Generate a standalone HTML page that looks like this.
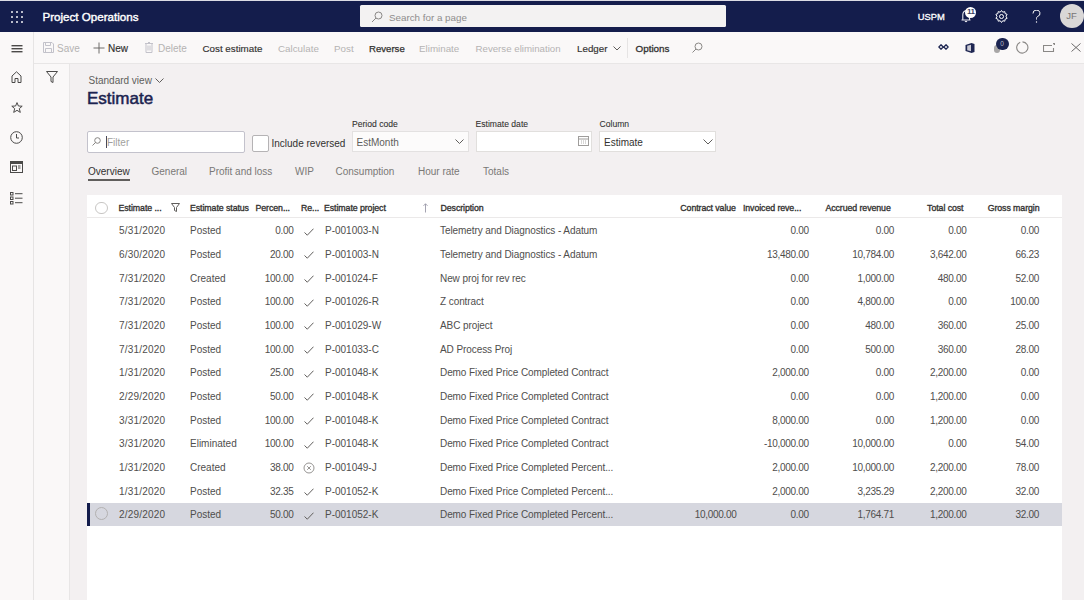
<!DOCTYPE html>
<html><head><meta charset="utf-8">
<style>
*{margin:0;padding:0;box-sizing:border-box}
html,body{width:1084px;height:600px;overflow:hidden;background:#f3f0f1;font-family:"Liberation Sans",sans-serif;color:#323130}
.a{position:absolute;white-space:nowrap}
.t{font-size:10px;line-height:12px}
#top{position:absolute;left:0;top:0;width:1084px;height:32px;background:#141d4c}
#nav{position:absolute;left:0;top:32px;width:34px;height:568px;background:#faf8f8;border-right:1px solid #e6e4e4}
#cmd{position:absolute;left:34px;top:32px;width:1050px;height:32px;background:#faf8f8;border-bottom:1px solid #e8e6e6}
#fp{position:absolute;left:34px;top:64px;width:35.5px;height:536px;background:#faf8f8;border-right:1px solid #e8e6e6}
#grid{position:absolute;left:87px;top:195px;width:974.5px;height:405px;background:#fff}
.dis{color:#b5b3b3}
.en{color:#323130}
.hd{font-size:8.8px;line-height:10px;color:#323130;-webkit-text-stroke:0.33px #323130;letter-spacing:-0.08px}
.sb{-webkit-text-stroke:0.35px currentColor}
.num{letter-spacing:-0.3px}
.cell{font-size:10px;line-height:12px;color:#4f4e4d}
.sel{position:absolute;left:87px;width:974.5px;background:#d6d7df}
</style></head><body>

<div id="top">
<div class="a" style="left:0;top:0;width:1084px;height:1px;background:#dcdce4"></div>
<svg class="a" style="left:11px;top:10.5px" width="12" height="12" viewBox="0 0 12 12" fill="#fff"><circle cx="1" cy="1" r="0.95"/><circle cx="1" cy="6" r="0.95"/><circle cx="1" cy="11" r="0.95"/><circle cx="6" cy="1" r="0.95"/><circle cx="6" cy="6" r="0.95"/><circle cx="6" cy="11" r="0.95"/><circle cx="11" cy="1" r="0.95"/><circle cx="11" cy="6" r="0.95"/><circle cx="11" cy="11" r="0.95"/></svg>
<div class="a " style="left:42.5px;top:9.5px;font-size:11.6px;color:#fff;line-height:13px;-webkit-text-stroke:0.4px #fff">Project Operations</div>
<div class="a" style="left:360px;top:5.2px;width:366px;height:21.6px;background:#f3f2f2;border-radius:1.5px"></div>
<svg class="a" style="left:371px;top:10.5px" width="12" height="12" viewBox="0 0 12 12" fill="none" stroke="#8a8886" stroke-width="1"><circle cx="7.5" cy="4.5" r="3.5"/><path d="M5 7 L1 11"/></svg>
<div class="a t" style="left:389px;top:11.8px;color:#8f8d8d;font-size:9.8px">Search for a page</div>
<div class="a " style="left:917.8px;top:11.3px;font-size:9.4px;color:#fff;line-height:12px;-webkit-text-stroke:0.3px #fff">USPM</div>
<svg class="a" style="left:960px;top:7px" width="14" height="16" viewBox="0 0 14 16" fill="none" stroke="#e8e8ee" stroke-width="1.1"><path d="M1.5 13 H10.5 M2.8 13 V8 Q2.8 4 6.5 3.5 M9.5 10 V13"/><path d="M5 14.2 Q6 15.2 7 14.2" stroke-width="1.2"/></svg>
<div class="a" style="left:965.2px;top:6.5px;width:11px;height:11px;border-radius:50%;background:#fff;color:#3a3f5f;font-size:8px;line-height:10.5px;text-align:center;font-weight:bold;letter-spacing:-0.6px">11</div>
<svg class="a" style="left:995px;top:10px" width="13" height="13" viewBox="0 0 13 13" fill="none" stroke="#fff" stroke-width="1"><circle cx="6.5" cy="6.5" r="2"/><path d="M6.5 0.5 L7.8 2.2 L9.8 1.6 L10.1 3.6 L12.1 4.3 L11 6.2 L12.1 8.4 L10.1 9.2 L9.8 11.2 L7.8 10.7 L6.5 12.5 L5.2 10.7 L3.2 11.2 L2.9 9.2 L0.9 8.4 L2 6.5 L0.9 4.3 L2.9 3.6 L3.2 1.6 L5.2 2.2 Z"/></svg>
<svg class="a" style="left:1032px;top:10px" width="9" height="14" viewBox="0 0 9 14" fill="none" stroke="#fff" stroke-width="1"><path d="M1 3.5 A3.5 3.3 0 1 1 5.5 6.5 Q4.5 7.2 4.5 8.5 V9.5"/><circle cx="4.5" cy="12" r="0.7" fill="#fff" stroke="none"/></svg>
<div class="a" style="left:1059.5px;top:4px;width:24px;height:24px;border-radius:12px;background:#d9d7d7;color:#777575;font-size:9.5px;line-height:24px;text-align:center">JF</div>
</div>
<div id="nav"></div>
<svg class="a" style="left:10.5px;top:44.6px" width="12" height="8" viewBox="0 0 12 8" fill="#4b4a49"><rect x="0.5" y="0" width="11" height="1.4"/><rect x="0.5" y="3" width="11" height="1.4"/><rect x="0.5" y="6" width="11" height="1.4"/></svg>
<svg class="a" style="left:11px;top:71px" width="11" height="12" viewBox="0 0 11 12" fill="none" stroke="#4b4a49" stroke-width="1"><path d="M1 11.5 V5 L5.5 0.8 L10 5 V11.5 H7 V7.5 H4 V11.5 Z"/></svg>
<svg class="a" style="left:10.5px;top:102px" width="12" height="11" viewBox="0 0 12 11" fill="none" stroke="#4b4a49" stroke-width="1"><path d="M6 0.6 L7.4 4 L11.2 4.2 L8.3 6.6 L9.3 10.4 L6 8.3 L2.7 10.4 L3.7 6.6 L0.8 4.2 L4.6 4 Z"/></svg>
<svg class="a" style="left:10px;top:131px" width="13" height="13" viewBox="0 0 13 13" fill="none" stroke="#4b4a49" stroke-width="1"><circle cx="6.5" cy="6.5" r="5.8"/><path d="M6.5 3 V7 H9"/></svg>
<svg class="a" style="left:10px;top:161px" width="13" height="12" viewBox="0 0 13 12"><rect x="0.5" y="0.5" width="12" height="11" fill="none" stroke="#4b4a49" stroke-width="1"/><rect x="0.5" y="0.5" width="12" height="2.5" fill="#4b4a49"/><rect x="2.5" y="5" width="4" height="4.5" fill="none" stroke="#4b4a49" stroke-width="1"/><path d="M8 5 H10.5 M8 7 H10.5" stroke="#4b4a49" stroke-width="1"/></svg>
<svg class="a" style="left:10px;top:191.5px" width="13" height="13" viewBox="0 0 13 13" fill="none" stroke="#4b4a49" stroke-width="1"><rect x="0.5" y="0.5" width="2.5" height="2.5"/><rect x="0.5" y="5" width="2.5" height="2.5"/><rect x="0.5" y="9.5" width="2.5" height="2.5"/><path d="M5 1.7 H12.5 M5 6.2 H12.5 M5 10.7 H12.5"/></svg>
<div id="cmd"></div>
<svg class="a" style="left:43px;top:42px" width="11" height="11" viewBox="0 0 11 11" fill="none" stroke="#c3c2ca" stroke-width="1"><path d="M0.5 0.5 H9 L10.5 2 V10.5 H0.5 Z M2.5 0.5 V3.5 H7.5 V0.5 M2.5 10.5 V6.5 H8.5 V10.5"/></svg>
<div class="a dis" style="left:57px;top:42.6px;font-size:10px">Save</div>
<svg class="a" style="left:93px;top:41.5px" width="12" height="12" viewBox="0 0 12 12" fill="none" stroke="#605e5c" stroke-width="0.9"><path d="M6 0.5 V11.5 M0.5 6 H11.5"/></svg>
<div class="a en" style="left:108px;top:42.6px;font-size:10px;-webkit-text-stroke:0.15px #323130">New</div>
<svg class="a" style="left:145px;top:42px" width="8" height="11" viewBox="0 0 8 11" fill="none" stroke="#c3c2ca" stroke-width="1"><path d="M0 1.5 H8 M3 0.5 H5 M1 1.5 V10.5 H7 V1.5 M3 3.5 V8.5 M5 3.5 V8.5"/></svg>
<div class="a dis" style="left:158px;top:42.6px;font-size:10px">Delete</div>
<div class="a en" style="left:202.5px;top:42.6px;font-size:9.8px;-webkit-text-stroke:0.15px #323130">Cost estimate</div>
<div class="a dis" style="left:278px;top:42.6px;font-size:9.8px">Calculate</div>
<div class="a dis" style="left:334px;top:42.6px;font-size:9.8px">Post</div>
<div class="a en" style="left:369px;top:42.6px;font-size:9.6px;-webkit-text-stroke:0.25px #323130">Reverse</div>
<div class="a dis" style="left:419px;top:42.6px;font-size:9.8px">Eliminate</div>
<div class="a dis" style="left:475.5px;top:42.6px;font-size:9.7px">Reverse elimination</div>
<div class="a en" style="left:577px;top:42.6px;font-size:9.8px;-webkit-text-stroke:0.15px #323130">Ledger</div>
<svg class="a" style="left:612.5px;top:46.3px" width="8" height="5" viewBox="0 0 8 5" fill="none" stroke="#605e5c" stroke-width="1"><path d="M0.5 0.5 L4 4 L7.5 0.5"/></svg>
<div class="a" style="left:627px;top:38px;width:1px;height:20px;background:#e6e4e4"></div>
<div class="a en" style="left:635.5px;top:42.6px;font-size:9.9px;-webkit-text-stroke:0.3px #323130">Options</div>
<svg class="a" style="left:692px;top:42px" width="11" height="11" viewBox="0 0 11 11" fill="none" stroke="#8a8886" stroke-width="1"><circle cx="6.5" cy="4.5" r="3.5"/><path d="M4 7 L0.5 10.5"/></svg>
<svg class="a" style="left:938px;top:44px" width="11" height="6" viewBox="0 0 11 6" fill="none" stroke="#1e2652" stroke-width="1.3"><path d="M3 0.8 L5.2 3 L3 5.2 L0.8 3 Z M8 0.8 L10.2 3 L8 5.2 L5.8 3 Z"/></svg>
<svg class="a" style="left:965px;top:43px" width="10" height="10" viewBox="0 0 10 10"><path d="M0.5 2 L6.5 0 L9.5 1 V9 L6.5 10 L0.5 8 Z" fill="#1e2652"/><path d="M2.2 2.8 L6 1.8 V8.2 L2.2 7.2 Z" fill="#c9c9d3"/></svg>
<div class="a" style="left:994px;top:45px;width:6px;height:8px;border-radius:3px;background:#a8a6a6"></div>
<div class="a" style="left:995.5px;top:38.3px;width:13px;height:11.5px;border-radius:6px;background:#1b2350;color:#b8b8c8;font-size:6.5px;line-height:11.5px;text-align:center">0</div>
<svg class="a" style="left:1016px;top:41px" width="13" height="13" viewBox="0 0 13 13" fill="none" stroke="#8a8886" stroke-width="1.1"><path d="M4.2 1.3 A5.6 5.6 0 1 0 6.5 0.9"/></svg>
<svg class="a" style="left:1043px;top:43px" width="12" height="9" viewBox="0 0 12 9" fill="none" stroke="#8a8886" stroke-width="1.1"><path d="M9 2.5 H0.5 V8.5 H10.5 V5"/><path d="M10 0.5 L11.5 0.5 L11.5 2" stroke-width="1.3"/></svg>
<svg class="a" style="left:1071px;top:43px" width="10" height="9" viewBox="0 0 10 9" fill="none" stroke="#6b6969" stroke-width="1"><path d="M0.5 0.5 L9.5 8.5 M9.5 0.5 L0.5 8.5"/></svg>
<div id="fp"></div>
<svg class="a" style="left:46px;top:71px" width="12" height="12" viewBox="0 0 12 12" fill="none" stroke="#4b4a49" stroke-width="1"><path d="M0.5 0.5 H11.5 L7 6 V11.5 L5 10.5 V6 Z"/></svg>
<div class="a t" style="left:88.5px;top:74.5px;font-size:10px;color:#605e5c">Standard view</div>
<svg class="a" style="left:155px;top:77.5px" width="9" height="5" viewBox="0 0 9 5" fill="none" stroke="#605e5c" stroke-width="1"><path d="M0.5 0.5 L4.5 4.5 L8.5 0.5"/></svg>
<div class="a " style="left:87px;top:89px;font-size:17px;color:#1b2350;line-height:19px;-webkit-text-stroke:0.5px #1b2350">Estimate</div>
<div class="a" style="left:87px;top:130.5px;width:158px;height:22px;background:#fff;border:1.3px solid #c3c2cc;border-radius:2px"></div>
<svg class="a" style="left:92px;top:137px" width="9" height="9" viewBox="0 0 9 9" fill="none" stroke="#7a7876" stroke-width="0.9"><circle cx="5.5" cy="3.5" r="2.8"/><path d="M3.5 5.5 L0.5 8.5"/></svg>
<div class="a" style="left:106px;top:135.5px;width:1.3px;height:12px;background:#4a4a5a"></div>
<div class="a t" style="left:107px;top:137px;color:#a19f9d">Filter</div>
<div class="a" style="left:252px;top:135px;width:17px;height:17px;background:#fff;border:1px solid #b5b3b5;border-radius:2px"></div>
<div class="a t" style="left:271.5px;top:138px;color:#323130;font-size:10px">Include reversed</div>
<div class="a " style="left:352px;top:119.3px;font-size:8.6px;line-height:10px;color:#323130;-webkit-text-stroke:0.08px #323130">Period code</div>
<div class="a" style="left:352px;top:131px;width:117px;height:21px;background:#fcfbfb;border:1px solid #e3e1e1"></div>
<div class="a t" style="left:356.5px;top:136.6px;color:#605e5c">EstMonth</div>
<svg class="a" style="left:455px;top:139px" width="9" height="5" viewBox="0 0 9 5" fill="none" stroke="#605e5c" stroke-width="1"><path d="M0.5 0.5 L4.5 4.5 L8.5 0.5"/></svg>
<div class="a " style="left:475.5px;top:119.3px;font-size:8.6px;line-height:10px;color:#323130;-webkit-text-stroke:0.08px #323130">Estimate date</div>
<div class="a" style="left:476px;top:131px;width:116px;height:21px;background:#fff;border:1px solid #e1dfdd"></div>
<svg class="a" style="left:578px;top:136px" width="11" height="10" viewBox="0 0 11 10" fill="none" stroke="#9f9d9b" stroke-width="1"><rect x="0.5" y="0.5" width="10" height="9"/><path d="M0.5 3 H10.5"/><path d="M3 5 H4 M5 5 H6 M7 5 H8 M3 7 H4 M5 7 H6 M7 7 H8" stroke-width="0.8"/></svg>
<div class="a " style="left:599.5px;top:119.3px;font-size:8.6px;line-height:10px;color:#323130;-webkit-text-stroke:0.08px #323130">Column</div>
<div class="a" style="left:599px;top:131px;width:117px;height:21px;background:#fff;border:1px solid #e1dfdd"></div>
<div class="a t" style="left:604px;top:136.5px;color:#323130">Estimate</div>
<svg class="a" style="left:703px;top:139px" width="10" height="6" viewBox="0 0 10 6" fill="none" stroke="#605e5c" stroke-width="1"><path d="M0.5 0.5 L5 5 L9.5 0.5"/></svg>
<div class="a t" style="left:88px;top:165.7px;color:#323130;font-size:10px">Overview</div>
<div class="a" style="left:88px;top:179px;width:42px;height:2px;background:#605e5c"></div>
<div class="a t" style="left:151.5px;top:165.7px;color:#7a7876;font-size:10px">General</div>
<div class="a t" style="left:209px;top:165.7px;color:#7a7876;font-size:10px">Profit and loss</div>
<div class="a t" style="left:295px;top:165.7px;color:#7a7876;font-size:10px">WIP</div>
<div class="a t" style="left:335.5px;top:165.7px;color:#7a7876;font-size:10px">Consumption</div>
<div class="a t" style="left:418px;top:165.7px;color:#7a7876;font-size:10px">Hour rate</div>
<div class="a t" style="left:483px;top:165.7px;color:#7a7876;font-size:10px">Totals</div>
<div id="grid"></div>
<div class="a" style="left:87px;top:217px;width:974.5px;height:1px;background:#ebe9e9"></div>
<div class="a" style="left:95px;top:201.5px;width:12.5px;height:12.5px;border:1px solid #c8c6c4;border-radius:50%"></div>
<div class="a hd" style="left:118.5px;top:202.5px;">Estimate ...</div>
<div class="a hd" style="left:190px;top:202.5px;">Estimate status</div>
<div class="a hd" style="left:255.5px;top:202.5px;">Percen...</div>
<div class="a hd" style="left:301px;top:202.5px;">Re...</div>
<div class="a hd" style="left:324px;top:202.5px;">Estimate project</div>
<div class="a hd" style="left:440.5px;top:202.5px;">Description</div>
<svg class="a" style="left:171px;top:203px" width="9" height="9" viewBox="0 0 9 9" fill="none" stroke="#605e5c" stroke-width="1"><path d="M0.5 0.5 H8.5 L5.5 4.5 V8.5 L3.5 7.5 V4.5 Z"/></svg>
<svg class="a" style="left:422.5px;top:202.8px" width="5" height="10" viewBox="0 0 5 10" fill="none" stroke="#9a99a8" stroke-width="0.9"><path d="M2.5 0.8 V9.5 M0.5 2.8 L2.5 0.8 L4.5 2.8"/></svg>
<div class="a hd" style="left:680.3px;top:202.5px;">Contract value</div>
<div class="a hd" style="left:742.9px;top:202.5px;">Invoiced reve...</div>
<div class="a hd" style="left:825.4px;top:202.5px;">Accrued revenue</div>
<div class="a hd" style="left:927.1px;top:202.5px;">Total cost</div>
<div class="a hd" style="left:987.7px;top:202.5px;">Gross margin</div>
<div class="a cell" style="left:119px;top:225.2px;letter-spacing:0.2px">5/31/2020</div>
<div class="a cell" style="left:190px;top:225.2px;">Posted</div>
<div class="a cell num" style="right:790.5px;top:225.2px;">0.00</div>
<svg class="a" style="left:304px;top:227.50px" width="10" height="8" viewBox="0 0 10 8" fill="none" stroke="#605e5c" stroke-width="1"><path d="M0.5 4.5 L3.3 7.2 L9.5 0.7"/></svg>
<div class="a cell" style="left:325px;top:225.2px;">P-001003-N</div>
<div class="a cell" style="left:440px;top:225.2px;letter-spacing:-0.08px">Telemetry and Diagnostics - Adatum</div>
<div class="a cell num" style="right:275.20000000000005px;top:225.2px;">0.00</div>
<div class="a cell num" style="right:190px;top:225.2px;">0.00</div>
<div class="a cell num" style="right:117.5px;top:225.2px;">0.00</div>
<div class="a cell num" style="right:45px;top:225.2px;">0.00</div>
<div class="a cell" style="left:119px;top:248.88px;letter-spacing:0.2px">6/30/2020</div>
<div class="a cell" style="left:190px;top:248.88px;">Posted</div>
<div class="a cell num" style="right:790.5px;top:248.88px;">20.00</div>
<svg class="a" style="left:304px;top:251.18px" width="10" height="8" viewBox="0 0 10 8" fill="none" stroke="#605e5c" stroke-width="1"><path d="M0.5 4.5 L3.3 7.2 L9.5 0.7"/></svg>
<div class="a cell" style="left:325px;top:248.88px;">P-001003-N</div>
<div class="a cell" style="left:440px;top:248.88px;letter-spacing:-0.08px">Telemetry and Diagnostics - Adatum</div>
<div class="a cell num" style="right:275.20000000000005px;top:248.88px;">13,480.00</div>
<div class="a cell num" style="right:190px;top:248.88px;">10,784.00</div>
<div class="a cell num" style="right:117.5px;top:248.88px;">3,642.00</div>
<div class="a cell num" style="right:45px;top:248.88px;">66.23</div>
<div class="a cell" style="left:119px;top:272.56px;letter-spacing:0.2px">7/31/2020</div>
<div class="a cell" style="left:190px;top:272.56px;">Created</div>
<div class="a cell num" style="right:790.5px;top:272.56px;">100.00</div>
<svg class="a" style="left:304px;top:274.86px" width="10" height="8" viewBox="0 0 10 8" fill="none" stroke="#605e5c" stroke-width="1"><path d="M0.5 4.5 L3.3 7.2 L9.5 0.7"/></svg>
<div class="a cell" style="left:325px;top:272.56px;">P-001024-F</div>
<div class="a cell" style="left:440px;top:272.56px;letter-spacing:-0.08px">New proj for rev rec</div>
<div class="a cell num" style="right:275.20000000000005px;top:272.56px;">0.00</div>
<div class="a cell num" style="right:190px;top:272.56px;">1,000.00</div>
<div class="a cell num" style="right:117.5px;top:272.56px;">480.00</div>
<div class="a cell num" style="right:45px;top:272.56px;">52.00</div>
<div class="a cell" style="left:119px;top:296.24px;letter-spacing:0.2px">7/31/2020</div>
<div class="a cell" style="left:190px;top:296.24px;">Posted</div>
<div class="a cell num" style="right:790.5px;top:296.24px;">100.00</div>
<svg class="a" style="left:304px;top:298.54px" width="10" height="8" viewBox="0 0 10 8" fill="none" stroke="#605e5c" stroke-width="1"><path d="M0.5 4.5 L3.3 7.2 L9.5 0.7"/></svg>
<div class="a cell" style="left:325px;top:296.24px;">P-001026-R</div>
<div class="a cell" style="left:440px;top:296.24px;letter-spacing:-0.08px">Z contract</div>
<div class="a cell num" style="right:275.20000000000005px;top:296.24px;">0.00</div>
<div class="a cell num" style="right:190px;top:296.24px;">4,800.00</div>
<div class="a cell num" style="right:117.5px;top:296.24px;">0.00</div>
<div class="a cell num" style="right:45px;top:296.24px;">100.00</div>
<div class="a cell" style="left:119px;top:319.92px;letter-spacing:0.2px">7/31/2020</div>
<div class="a cell" style="left:190px;top:319.92px;">Posted</div>
<div class="a cell num" style="right:790.5px;top:319.92px;">100.00</div>
<svg class="a" style="left:304px;top:322.22px" width="10" height="8" viewBox="0 0 10 8" fill="none" stroke="#605e5c" stroke-width="1"><path d="M0.5 4.5 L3.3 7.2 L9.5 0.7"/></svg>
<div class="a cell" style="left:325px;top:319.92px;">P-001029-W</div>
<div class="a cell" style="left:440px;top:319.92px;letter-spacing:-0.08px">ABC project</div>
<div class="a cell num" style="right:275.20000000000005px;top:319.92px;">0.00</div>
<div class="a cell num" style="right:190px;top:319.92px;">480.00</div>
<div class="a cell num" style="right:117.5px;top:319.92px;">360.00</div>
<div class="a cell num" style="right:45px;top:319.92px;">25.00</div>
<div class="a cell" style="left:119px;top:343.6px;letter-spacing:0.2px">7/31/2020</div>
<div class="a cell" style="left:190px;top:343.6px;">Posted</div>
<div class="a cell num" style="right:790.5px;top:343.6px;">100.00</div>
<svg class="a" style="left:304px;top:345.90px" width="10" height="8" viewBox="0 0 10 8" fill="none" stroke="#605e5c" stroke-width="1"><path d="M0.5 4.5 L3.3 7.2 L9.5 0.7"/></svg>
<div class="a cell" style="left:325px;top:343.6px;">P-001033-C</div>
<div class="a cell" style="left:440px;top:343.6px;letter-spacing:-0.08px">AD Process Proj</div>
<div class="a cell num" style="right:275.20000000000005px;top:343.6px;">0.00</div>
<div class="a cell num" style="right:190px;top:343.6px;">500.00</div>
<div class="a cell num" style="right:117.5px;top:343.6px;">360.00</div>
<div class="a cell num" style="right:45px;top:343.6px;">28.00</div>
<div class="a cell" style="left:119px;top:367.28px;letter-spacing:0.2px">1/31/2020</div>
<div class="a cell" style="left:190px;top:367.28px;">Posted</div>
<div class="a cell num" style="right:790.5px;top:367.28px;">25.00</div>
<svg class="a" style="left:304px;top:369.58px" width="10" height="8" viewBox="0 0 10 8" fill="none" stroke="#605e5c" stroke-width="1"><path d="M0.5 4.5 L3.3 7.2 L9.5 0.7"/></svg>
<div class="a cell" style="left:325px;top:367.28px;">P-001048-K</div>
<div class="a cell" style="left:440px;top:367.28px;letter-spacing:-0.08px">Demo Fixed Price Completed Contract</div>
<div class="a cell num" style="right:275.20000000000005px;top:367.28px;">2,000.00</div>
<div class="a cell num" style="right:190px;top:367.28px;">0.00</div>
<div class="a cell num" style="right:117.5px;top:367.28px;">2,200.00</div>
<div class="a cell num" style="right:45px;top:367.28px;">0.00</div>
<div class="a cell" style="left:119px;top:390.96px;letter-spacing:0.2px">2/29/2020</div>
<div class="a cell" style="left:190px;top:390.96px;">Posted</div>
<div class="a cell num" style="right:790.5px;top:390.96px;">50.00</div>
<svg class="a" style="left:304px;top:393.26px" width="10" height="8" viewBox="0 0 10 8" fill="none" stroke="#605e5c" stroke-width="1"><path d="M0.5 4.5 L3.3 7.2 L9.5 0.7"/></svg>
<div class="a cell" style="left:325px;top:390.96px;">P-001048-K</div>
<div class="a cell" style="left:440px;top:390.96px;letter-spacing:-0.08px">Demo Fixed Price Completed Contract</div>
<div class="a cell num" style="right:275.20000000000005px;top:390.96px;">0.00</div>
<div class="a cell num" style="right:190px;top:390.96px;">0.00</div>
<div class="a cell num" style="right:117.5px;top:390.96px;">1,200.00</div>
<div class="a cell num" style="right:45px;top:390.96px;">0.00</div>
<div class="a cell" style="left:119px;top:414.64px;letter-spacing:0.2px">3/31/2020</div>
<div class="a cell" style="left:190px;top:414.64px;">Posted</div>
<div class="a cell num" style="right:790.5px;top:414.64px;">100.00</div>
<svg class="a" style="left:304px;top:416.94px" width="10" height="8" viewBox="0 0 10 8" fill="none" stroke="#605e5c" stroke-width="1"><path d="M0.5 4.5 L3.3 7.2 L9.5 0.7"/></svg>
<div class="a cell" style="left:325px;top:414.64px;">P-001048-K</div>
<div class="a cell" style="left:440px;top:414.64px;letter-spacing:-0.08px">Demo Fixed Price Completed Contract</div>
<div class="a cell num" style="right:275.20000000000005px;top:414.64px;">8,000.00</div>
<div class="a cell num" style="right:190px;top:414.64px;">0.00</div>
<div class="a cell num" style="right:117.5px;top:414.64px;">1,200.00</div>
<div class="a cell num" style="right:45px;top:414.64px;">0.00</div>
<div class="a cell" style="left:119px;top:438.32px;letter-spacing:0.2px">3/31/2020</div>
<div class="a cell" style="left:190px;top:438.32px;">Eliminated</div>
<div class="a cell num" style="right:790.5px;top:438.32px;">100.00</div>
<svg class="a" style="left:304px;top:440.62px" width="10" height="8" viewBox="0 0 10 8" fill="none" stroke="#605e5c" stroke-width="1"><path d="M0.5 4.5 L3.3 7.2 L9.5 0.7"/></svg>
<div class="a cell" style="left:325px;top:438.32px;">P-001048-K</div>
<div class="a cell" style="left:440px;top:438.32px;letter-spacing:-0.08px">Demo Fixed Price Completed Contract</div>
<div class="a cell num" style="right:275.20000000000005px;top:438.32px;">-10,000.00</div>
<div class="a cell num" style="right:190px;top:438.32px;">10,000.00</div>
<div class="a cell num" style="right:117.5px;top:438.32px;">0.00</div>
<div class="a cell num" style="right:45px;top:438.32px;">54.00</div>
<div class="a cell" style="left:119px;top:462.0px;letter-spacing:0.2px">1/31/2020</div>
<div class="a cell" style="left:190px;top:462.0px;">Created</div>
<div class="a cell num" style="right:790.5px;top:462.0px;">38.00</div>
<svg class="a" style="left:303px;top:462.00px" width="12" height="12" viewBox="0 0 12 12" fill="none" stroke="#8a8886" stroke-width="0.9"><circle cx="6" cy="6" r="5"/><path d="M4.2 4.2 L7.8 7.8 M7.8 4.2 L4.2 7.8"/></svg>
<div class="a cell" style="left:325px;top:462.0px;">P-001049-J</div>
<div class="a cell" style="left:440px;top:462.0px;letter-spacing:-0.08px">Demo Fixed Price Completed Percent...</div>
<div class="a cell num" style="right:275.20000000000005px;top:462.0px;">2,000.00</div>
<div class="a cell num" style="right:190px;top:462.0px;">10,000.00</div>
<div class="a cell num" style="right:117.5px;top:462.0px;">2,200.00</div>
<div class="a cell num" style="right:45px;top:462.0px;">78.00</div>
<div class="a cell" style="left:119px;top:485.68px;letter-spacing:0.2px">1/31/2020</div>
<div class="a cell" style="left:190px;top:485.68px;">Posted</div>
<div class="a cell num" style="right:790.5px;top:485.68px;">32.35</div>
<svg class="a" style="left:304px;top:487.98px" width="10" height="8" viewBox="0 0 10 8" fill="none" stroke="#605e5c" stroke-width="1"><path d="M0.5 4.5 L3.3 7.2 L9.5 0.7"/></svg>
<div class="a cell" style="left:325px;top:485.68px;">P-001052-K</div>
<div class="a cell" style="left:440px;top:485.68px;letter-spacing:-0.08px">Demo Fixed Price Completed Percent...</div>
<div class="a cell num" style="right:275.20000000000005px;top:485.68px;">2,000.00</div>
<div class="a cell num" style="right:190px;top:485.68px;">3,235.29</div>
<div class="a cell num" style="right:117.5px;top:485.68px;">2,200.00</div>
<div class="a cell num" style="right:45px;top:485.68px;">32.00</div>
<div class="sel" style="top:503.16px;height:22.68px"></div>
<div class="a" style="left:87px;top:503.16px;width:3px;height:22.68px;background:#141d4c"></div>
<div class="a" style="left:94.5px;top:507.46px;width:13px;height:13px;border:1px solid #b3b1b1;border-radius:50%"></div>
<div class="a cell" style="left:119px;top:509.36px;letter-spacing:0.2px">2/29/2020</div>
<div class="a cell" style="left:190px;top:509.36px;">Posted</div>
<div class="a cell num" style="right:790.5px;top:509.36px;">50.00</div>
<svg class="a" style="left:304px;top:511.66px" width="10" height="8" viewBox="0 0 10 8" fill="none" stroke="#605e5c" stroke-width="1"><path d="M0.5 4.5 L3.3 7.2 L9.5 0.7"/></svg>
<div class="a cell" style="left:325px;top:509.36px;">P-001052-K</div>
<div class="a cell" style="left:440px;top:509.36px;letter-spacing:-0.08px">Demo Fixed Price Completed Percent...</div>
<div class="a cell num" style="right:347.5px;top:509.36px;">10,000.00</div>
<div class="a cell num" style="right:275.20000000000005px;top:509.36px;">0.00</div>
<div class="a cell num" style="right:190px;top:509.36px;">1,764.71</div>
<div class="a cell num" style="right:117.5px;top:509.36px;">1,200.00</div>
<div class="a cell num" style="right:45px;top:509.36px;">32.00</div>
</body></html>
